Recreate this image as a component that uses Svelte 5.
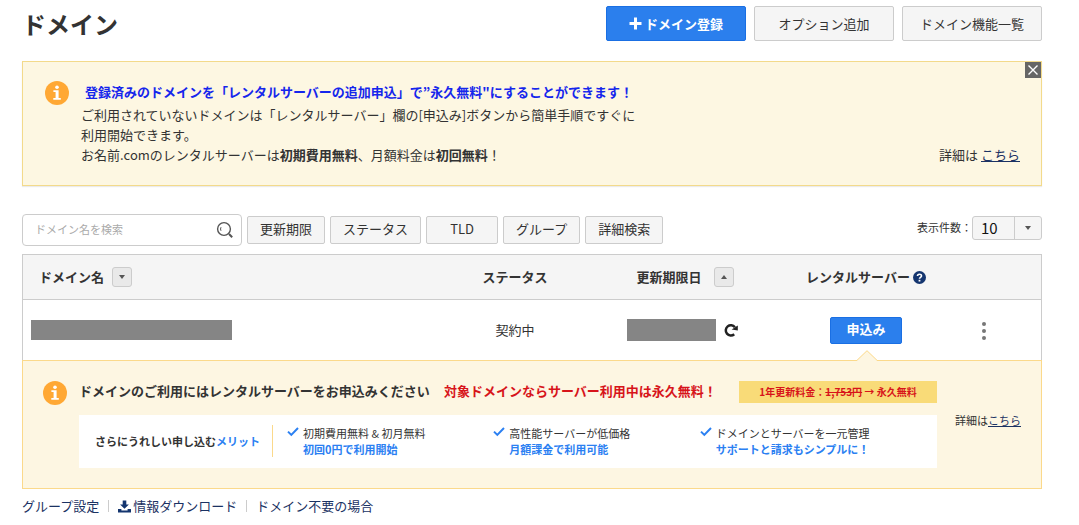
<script lang="ts">
  const filters = ['更新期限', 'ステータス', 'TLD', 'グループ', '詳細検索'];

  const merits = [
    { lead: '初期費用無料 & 初月無料', strong: '初回0円で利用開始' },
    { lead: '高性能サーバーが低価格', strong: '月額課金で利用可能' },
    { lead: 'ドメインとサーバーを一元管理', strong: 'サポートと請求もシンプルに！' },
  ];

  let keyword = $state('');
  let perPage = $state('10');
  let noticeOpen = $state(true);
</script>

{#snippet infoIcon()}
  <svg class="info-icon" viewBox="0 0 24 24" aria-hidden="true">
    <circle cx="12" cy="12" r="12" fill="#ffa834" />
    <circle cx="12" cy="6.2" r="1.8" fill="#fff" />
    <path d="M8.4 9.2h5.2v7.9h2.2v1.7H8.3v-1.7h2.3v-6.2H8.4z" fill="#fff" />
  </svg>
{/snippet}

<div class="page">
  <header class="page-header">
    <h1>ドメイン</h1>
    <div class="header-actions">
      <button type="button" class="btn btn-large btn-primary">
        <svg width="13" height="13" viewBox="0 0 13 13" aria-hidden="true">
          <path d="M6.5 0.5v12M0.5 6.5h12" stroke="#fff" stroke-width="3" />
        </svg>
        ドメイン登録
      </button>
      <button type="button" class="btn btn-large">オプション追加</button>
      <button type="button" class="btn btn-large">ドメイン機能一覧</button>
    </div>
  </header>

  {#if noticeOpen}
    <section class="notice">
      {@render infoIcon()}
      <div class="notice-body">
        <h2>登録済みのドメインを「レンタルサーバーの追加申込」で”永久無料"にすることができます！</h2>
        <p>
          ご利用されていないドメインは「レンタルサーバー」欄の[申込み]ボタンから簡単手順ですぐに<br />
          利用開始できます。<br />
          お名前.comのレンタルサーバーは<b>初期費用無料</b>、月額料金は<b>初回無料</b>！
        </p>
      </div>
      <p class="notice-more">詳細は <a href="#detail">こちら</a></p>
      <button type="button" class="notice-close" aria-label="閉じる" onclick={() => (noticeOpen = false)}>
        <svg width="16" height="16" viewBox="0 0 16 16" aria-hidden="true">
          <path d="M3.5 3.5l9 9M12.5 3.5l-9 9" stroke="#fff" stroke-width="1.4" />
        </svg>
      </button>
    </section>
  {/if}

  <div class="toolbar">
    <form class="search" onsubmit={(e) => e.preventDefault()}>
      <input type="text" aria-label="ドメイン名を検索" placeholder="ドメイン名を検索" bind:value={keyword} />
      <button type="submit" aria-label="検索">
        <svg width="18" height="18" viewBox="0 0 18 18" fill="none" stroke="#555" aria-hidden="true">
          <circle cx="8" cy="8" r="6.4" stroke-width="1.4" />
          <path d="M5 6.2q-1 1.8 0 3.6" stroke-width="1" />
          <path d="M13 13l3.2 3.2" stroke-width="2" />
        </svg>
      </button>
    </form>
    {#each filters as filter}
      <button type="button" class="btn btn-filter">{filter}</button>
    {/each}
    <div class="per-page">
      <label for="per-page">表示件数：</label>
      <div class="select">
        <select id="per-page" bind:value={perPage}>
          <option>10</option>
          <option>50</option>
          <option>100</option>
        </select>
        <span class="select-arrow"><i class="caret"></i></span>
      </div>
    </div>
  </div>

  <table>
    <colgroup>
      <col />
      <col class="col-status" />
      <col class="col-renewal" />
      <col class="col-server" />
      <col class="col-menu" />
    </colgroup>
    <thead>
      <tr>
        <th class="domain">
          <div class="cell">
            ドメイン名
            <button type="button" class="sort" aria-label="ドメイン名で並べ替え"><i class="caret"></i></button>
          </div>
        </th>
        <th>ステータス</th>
        <th>
          <div class="cell renewal-head">
            更新期限日
            <button type="button" class="sort" aria-label="更新期限日で並べ替え"><i class="caret up"></i></button>
          </div>
        </th>
        <th>
          <div class="cell server-head">
            レンタルサーバー
            <svg width="13" height="13" viewBox="0 0 13 13" aria-hidden="true">
              <circle cx="6.5" cy="6.5" r="6.5" fill="#14356f" />
              <path d="M4.5 5.1c0-2.5 4-2.4 4-.2 0 1.5-2 1.3-2 2.8" fill="none" stroke="#fff" stroke-width="1.6" />
              <rect x="5.6" y="8.8" width="1.8" height="1.7" fill="#fff" />
            </svg>
          </div>
        </th>
        <th aria-label="メニュー"></th>
      </tr>
    </thead>
    <tbody>
      <tr class="row">
        <td class="domain"><div class="mask mask-domain"></div></td>
        <td>契約中</td>
        <td>
          <div class="cell renewal">
            <div class="mask mask-date"></div>
            <button type="button" class="plain" aria-label="更新">
              <svg width="14" height="14" viewBox="0 0 14 14" aria-hidden="true">
                <path d="M10.2 11.2A5.1 5.1 0 1 1 10.9 4.2" fill="none" stroke="#222" stroke-width="2.5" />
                <path d="M13.8 2.6v4.8L7.6 6.4z" fill="#222" />
              </svg>
            </button>
          </div>
        </td>
        <td><button type="button" class="btn btn-primary btn-apply">申込み</button></td>
        <td>
          <button type="button" class="plain" aria-label="操作メニュー">
            <svg width="6" height="20" viewBox="0 0 6 20" fill="#777" aria-hidden="true">
              <circle cx="3" cy="3" r="2" />
              <circle cx="3" cy="10" r="2" />
              <circle cx="3" cy="17" r="2" />
            </svg>
          </button>
        </td>
      </tr>
      <tr>
        <td class="promo-cell" colspan="5">
          <div class="promo">
            <svg class="promo-arrow" width="20" height="11" viewBox="0 0 20 11" aria-hidden="true">
              <path d="M0 11V10L10 0.5L20 10V11z" fill="#fdf6e2" />
              <path d="M0 10.3L10 0.7L20 10.3" fill="none" stroke="#fbd98b" />
            </svg>
            {@render infoIcon()}
            <div class="promo-body">
              <div class="promo-title">
                <strong>ドメインのご利用にはレンタルサーバーをお申込みください</strong>
                <strong class="red">対象ドメインならサーバー利用中は永久無料！</strong>
                <span class="price">1年更新料金：<s>1,753円</s> → 永久無料</span>
              </div>
              <div class="merits">
                <p class="merits-label">さらにうれしい申し込む<em>メリット</em></p>
                <ul>
                  {#each merits as merit}
                    <li>
                      <svg width="12" height="16" viewBox="0 0 12 16" aria-hidden="true">
                        <path d="M1 6.6l3.3 3.3L11 3" fill="none" stroke="#2b80f2" stroke-width="2" />
                      </svg>
                      <div>{merit.lead}<b>{merit.strong}</b></div>
                    </li>
                  {/each}
                </ul>
              </div>
            </div>
            <p class="promo-more">詳細は<a href="#promo">こちら</a></p>
          </div>
        </td>
      </tr>
    </tbody>
  </table>

  <nav class="footer-links">
    <a href="#group">グループ設定</a>
    <a href="#download">
      <svg width="13" height="13" viewBox="0 0 13 13" fill="#14356f" aria-hidden="true">
        <path d="M4.7 0.5h3.6v3.9h2.6L6.5 8.8 2.1 4.4h2.6z" />
        <path d="M0 9h3.4v1.4h6.2V9H13v3.6H0z" />
      </svg>
      情報ダウンロード
    </a>
    <a href="#unneeded">ドメイン不要の場合</a>
  </nav>
</div>

<style>
  :global(body) {
    margin: 0;
    background: #fff;
  }

  .page {
    padding: 6px 37px 0 22px;
    font-family: 'Noto Sans CJK JP', sans-serif;
    font-size: 13px;
    line-height: 20px;
    color: #333;
  }

  h1,
  h2,
  p,
  ul {
    margin: 0;
    padding: 0;
  }

  button,
  input,
  select {
    box-sizing: border-box;
    margin: 0;
    font-family: inherit;
    color: inherit;
  }

  button {
    display: inline-flex;
    align-items: center;
    justify-content: center;
    padding: 0;
    vertical-align: middle;
    cursor: pointer;
  }

  svg {
    display: block;
    flex: none;
  }

  a {
    color: #1b3263;
  }

  .btn {
    font-size: 13px;
    line-height: 20px;
    white-space: nowrap;
    background: #f5f5f5;
    border: 1px solid #ccc;
    border-radius: 2px;
  }

  .btn-large {
    gap: 3px;
    width: 140px;
    height: 35px;
  }

  .btn-primary {
    font-weight: 700;
    color: #fff;
    background: #2b7fed;
    border-color: #1a6fe3;
  }

  .btn-filter {
    min-width: 72px;
    height: 28px;
    padding: 0 12px 2px;
  }

  .btn-apply {
    width: 72px;
    height: 27px;
    padding-bottom: 2px;
  }

  .plain {
    background: none;
    border: none;
  }

  .page-header {
    display: flex;
    align-items: center;
    justify-content: space-between;
    margin-bottom: 20px;
  }

  h1 {
    font-size: 24px;
    line-height: 35px;
  }

  .header-actions {
    display: flex;
    gap: 8px;
  }

  .info-icon {
    width: 24px;
    height: 24px;
  }

  .notice {
    position: relative;
    display: flex;
    margin-bottom: 28px;
    padding: 19px 21px 20px 22px;
    background: #fdf7e2;
    border: 1px solid #f3da8b;
    box-shadow: 0 1px 1px rgba(0, 0, 0, 0.08);
  }

  .notice-body {
    flex: 1;
    margin-left: 12px;
  }

  .notice h2 {
    margin: 0 0 2px 4px;
    font-size: 13px;
    line-height: 22px;
    color: #1526ec;
  }

  .notice-more {
    align-self: flex-end;
  }

  .notice-close {
    position: absolute;
    top: 0;
    right: 0;
    background: #666;
    border: none;
  }

  .toolbar {
    display: flex;
    align-items: center;
    gap: 5px;
    margin-bottom: 8px;
  }

  .search {
    display: flex;
    box-sizing: border-box;
    width: 220px;
    height: 32px;
    padding: 0 7px 0 12px;
    border: 1px solid #ccc;
    border-radius: 4px;
  }

  .search input {
    flex: 1;
    min-width: 0;
    padding: 0 0 2px;
    font-size: 11px;
    background: none;
    border: none;
    outline: none;
  }

  .search input::placeholder {
    color: #aaa;
  }

  .search button {
    background: none;
    border: none;
  }

  .per-page {
    display: flex;
    align-items: center;
    align-self: flex-start;
    margin: 2px 0 0 auto;
    font-size: 11px;
  }

  .per-page label {
    padding-bottom: 2px;
  }

  .select {
    position: relative;
  }

  select {
    display: block;
    width: 70px;
    height: 24px;
    padding: 0 8px;
    font-size: 15px;
    line-height: 22px;
    color: #111;
    background: #f5f5f5;
    border: 1px solid #ccc;
    border-radius: 3px;
    appearance: none;
  }

  .select-arrow {
    position: absolute;
    top: 1px;
    right: 1px;
    bottom: 1px;
    display: flex;
    align-items: center;
    justify-content: center;
    width: 26px;
    border-left: 1px solid #ccc;
    pointer-events: none;
  }

  .caret {
    border: 3px solid transparent;
    border-top: 4px solid #555;
    border-bottom: 0;
  }

  .caret.up {
    border-top: 0;
    border-bottom: 4px solid #555;
  }

  table {
    width: 100%;
    table-layout: fixed;
    border-collapse: separate;
    border-spacing: 0;
    border: solid #ccc;
    border-width: 1px 0 0;
  }

  .col-status {
    width: 98px;
  }

  .col-renewal {
    width: 242px;
  }

  .col-server {
    width: 120px;
  }

  .col-menu {
    width: 116px;
  }

  th,
  td {
    padding: 0;
    text-align: center;
    white-space: nowrap;
  }

  th {
    height: 44px;
    background: #f5f5f5;
    border-bottom: 1px solid #ccc;
  }

  th:first-child,
  .row td:first-child {
    border-left: 1px solid #ccc;
  }

  th:last-child,
  .row td:last-child {
    border-right: 1px solid #ccc;
  }

  th.domain {
    padding-left: 16px;
  }

  td.domain {
    padding-left: 8px;
  }

  .row td {
    height: 60px;
  }

  .cell {
    display: flex;
    align-items: center;
    gap: 8px;
  }

  .renewal-head {
    justify-content: center;
    gap: 12px;
  }

  .server-head {
    justify-content: center;
    gap: 3px;
  }

  .renewal {
    justify-content: center;
    padding-right: 6px;
  }

  .sort {
    width: 20px;
    height: 20px;
    background: #e9e9e9;
    border: 1px solid #ccc;
    border-radius: 3px;
  }

  .mask {
    background: #858585;
  }

  .mask-domain {
    width: 201px;
    height: 20px;
  }

  .mask-date {
    width: 89px;
    height: 22px;
  }

  .promo-cell {
    text-align: left;
    background: #fdf6e2;
    border: 1px solid #fbd98b;
  }

  .promo {
    position: relative;
    display: flex;
    padding: 20px;
  }

  .promo-arrow {
    position: absolute;
    top: -11px;
    right: 164px;
  }

  .promo-body {
    flex: 1;
    margin: 0 18px 0 12px;
  }

  .promo-title {
    display: flex;
    align-items: center;
    gap: 14px;
    margin-bottom: 12px;
  }

  .promo-title strong {
    padding-bottom: 2px;
  }

  .red {
    color: #d7141a;
  }

  .price {
    width: 198px;
    margin-left: auto;
    padding: 1px 0;
    font-size: 10px;
    font-weight: 700;
    text-align: center;
    color: #d7141a;
    background: #f9db78;
  }

  .merits {
    display: flex;
    align-items: center;
    padding: 10px 31px 11px 16px;
    font-size: 11px;
    line-height: 16px;
    background: #fff;
  }

  .merits-label {
    padding-right: 12px;
    font-weight: 700;
  }

  .merits em {
    font-style: normal;
    color: #2b80f2;
  }

  .merits ul {
    display: grid;
    grid-template-columns: repeat(3, 1fr);
    flex: 1;
    padding-left: 14px;
    list-style: none;
    border-left: 1px solid #fbd98b;
  }

  .merits li {
    display: flex;
    gap: 4px;
  }

  .merits b {
    display: block;
    color: #2b80f2;
  }

  .promo-more {
    align-self: center;
    padding-bottom: 10px;
    font-size: 11px;
  }

  .footer-links {
    display: flex;
    margin-top: 7px;
  }

  .footer-links a {
    display: flex;
    align-items: center;
    gap: 2px;
    text-decoration: none;
  }

  .footer-links a + a {
    position: relative;
    margin-left: 9px;
    padding-left: 10px;
  }

  .footer-links a + a::before {
    position: absolute;
    left: 0;
    width: 1px;
    height: 12px;
    content: '';
    background: #ccc;
  }
</style>
